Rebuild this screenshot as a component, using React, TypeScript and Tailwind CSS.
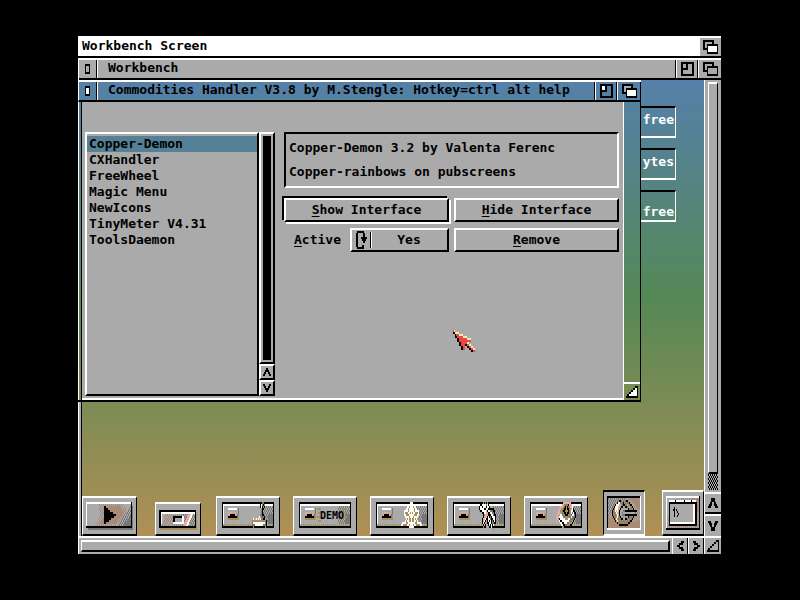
import React from "react";

const COLORS: Record<string, string> = {
  K: "#000000",
  W: "#ffffff",
  g: "#aaaaaa",
  G: "#777777",
  Y: "#aa9055",
  P: "#f0a898",
  B: "#a88a78",
  R: "#ee4444",
  C: "#eeeebb",
};

const RAINBOW =
  "bg-[linear-gradient(to_bottom,#5580aa_0px,#558855_220px,#b09055_456px)]";

/* Draws rows of colour letters; every cell is cw x ch pixels, a dot is see-through. */
function Pixels({ rows, x = 0, y = 0, cw = 1, ch = 2 }: { rows: string[]; x?: number; y?: number; cw?: number; ch?: number }) {
  const out: React.ReactNode[] = [];
  rows.forEach((row, r) => {
    let i = 0;
    while (i < row.length) {
      let j = i + 1;
      while (j < row.length && row[j] === row[i]) j++;
      if (row[i] !== ".") {
        out.push(
          <rect key={`${r}-${i}`} x={x + i * cw} y={y + r * ch} width={(j - i) * cw} height={ch} fill={COLORS[row[i]]} />
        );
      }
      i = j;
    }
  });
  return <g shapeRendering="crispEdges">{out}</g>;
}

function Svg({ w, h, children }: { w: number; h: number; children: React.ReactNode }) {
  return (
    <svg width={w} height={h} viewBox={`0 0 ${w} ${h}`} shapeRendering="crispEdges" className="block shrink-0" aria-hidden="true">
      {children}
    </svg>
  );
}

function Patterns() {
  return (
    <svg width="0" height="0" className="absolute" aria-hidden="true">
      <defs>
        <pattern id="dither" width="2" height="4" patternUnits="userSpaceOnUse">
          <rect width="1" height="2" fill="#777777" />
          <rect x="1" y="2" width="1" height="2" fill="#777777" />
        </pattern>
        <pattern id="tan" width="2" height="4" patternUnits="userSpaceOnUse">
          <rect width="1" height="2" fill="#a88a78" />
          <rect x="1" y="2" width="1" height="2" fill="#a88a78" />
        </pattern>
        <pattern id="goldDots" width="2" height="2" patternUnits="userSpaceOnUse">
          <rect width="1" height="2" fill="#aa9055" />
        </pattern>
        <pattern id="hatch" width="2" height="4" patternUnits="userSpaceOnUse">
          <rect width="1" height="2" fill="#000000" />
          <rect x="1" y="2" width="1" height="2" fill="#000000" />
        </pattern>
      </defs>
    </svg>
  );
}

/* ---------- title bar gadgets ---------- */

function CloseGlyph({ active }: { active?: boolean }) {
  return (
    <Svg w={5} h={10}>
      <rect width="5" height="10" fill="#000" />
      <rect x="1" y="2" width="3" height="6" fill={active ? "#fff" : "#aaa"} />
    </Svg>
  );
}

function ZoomGlyph({ active }: { active?: boolean }) {
  return (
    <Svg w={13} h={14}>
      <path d="M0 0h13v14H0zM2 2v10h9V2z" fill="#000" fillRule="evenodd" />
      <rect x="2" y="2" width="5" height="6" fill="#000" />
      <rect x="2" y="2" width="3" height="4" fill={active ? "#fff" : "#aaa"} />
    </Svg>
  );
}

function DepthGlyph({ active }: { active?: boolean }) {
  return (
    <Svg w={15} h={14}>
      <rect width="11" height="10" fill="#000" />
      <rect x="2" y="2" width="7" height="6" fill="#aaa" />
      <rect x="4" y="4" width="11" height="10" fill="#000" />
      <rect x="5" y="6" width="9" height="6" fill={active ? "#fff" : "#aaa"} />
    </Svg>
  );
}

function SizeGlyph({ active }: { active?: boolean }) {
  const rows = [
    ".........KKK",
    ".......KKffK",
    ".....KKffffK",
    "...KKffffffK",
    ".KKffffffffK",
    "KKKKKKKKKKKK",
  ];
  return (
    <Svg w={12} h={12}>
      <Pixels rows={rows.map((r) => r.replace(/f/g, active ? "W" : "g"))} />
    </Svg>
  );
}

const UP = ["...KKKK...", "...KKKK...", "..KK..KK..", ".KKK..KKK.", "KKK....KKK"];
const UP_SMALL = ["...KK...", "..KKKK..", ".KK..KK.", "KK....KK"];
const LEFT = ["....KKK", "..KKKK.", "KKK....", "..KKKK.", "....KKK"];

function Arrow({ dir, small }: { dir: "up" | "down" | "left" | "right"; small?: boolean }) {
  const flip = (r: string) => r.split("").reverse().join("");
  if (dir === "up" || dir === "down") {
    const base = small ? UP_SMALL : UP;
    return (
      <Svg w={small ? 8 : 10} h={small ? 8 : 10}>
        <Pixels rows={dir === "up" ? base : [...base].reverse()} />
      </Svg>
    );
  }
  return (
    <Svg w={7} h={10}>
      <Pixels rows={dir === "left" ? LEFT : LEFT.map(flip)} />
    </Svg>
  );
}

/* ---------- desktop icons ---------- */

const STATUE = [
  "..........KGGK........",
  ".........KWYKY........",
  "........gKWKYKg.......",
  "..........YKK.........",
  "..........GK..........",
  ".........gGK..........",
  "........gGGKK.........",
  "........W.GGGK........",
  "..W.PW.WPWGGKK........",
  ".YYYYYYYYYYYYYYK......",
  ".GWWWWWWWWWWWWGK......",
  ".GGGWWWWWWWWGGGK......",
  "..YKKKKKKKKKKKY.......",
];

const CREST = [
  ".........WWW..........",
  "........WWWWW.........",
  "......WWYWWWYWW.......",
  ".....WWYWWWWWYWW......",
  "...WWWWYWWWWWYWWWW....",
  "...WYYYWWYWYWWYYYW....",
  "...WWYYYWWWWWYYYWW....",
  "....WWWWYWWWYWWWW.....",
  ".....WYWYYWYYWYW......",
  "....WYWWYYWYYWWYW.....",
  ".WWWWYYWWWWWWWYYWWWW..",
  "WWYYYYWWYWWWYWWYYYYWW.",
  "........WWWWW.........",
];

const JESTER = [
  "....YKGKY............",
  ".KKWWWWYWK...........",
  "KWWKWWWKWWK..........",
  "KWWWWKKWWKKKKKK......",
  "YKKWWWWPKWWGGGKK.....",
  "...KKWWPPKKWWGGK.....",
  "....KYPPPKKKWWGKK....",
  "....KPPPKWKGKWWWK....",
  "...KPPWKKWWGKKWWK....",
  "...KPWKgKWKWKGKWK....",
  "...KWKggKKWWKGGKK....",
  "....KPKggKWKWKWG.....",
  "....YKKgggKKWKK......",
  "..............Y......",
];

const WATCH = [
  ".......PPPPPPPP.......",
  "......PPYGGGKPPP......",
  "....PPPYGKYKGYPPW.....",
  "...PPYYGKKYKKGYPWK....",
  "..PPYYGKKYYYKGYWWKK...",
  ".PPP.YGYKKYKKGYWGWKK..",
  ".P..WWGYYKKKYGYGWWGK..",
  "PP.WWWWGGYYYGYGWGGGK..",
  "PP.KWWWWWYYYWWGGGGK...",
  "P..WKKWWWWWWWGGYYK....",
  "....WWKKWWWGGYYYK.....",
  ".....WWKKGGYYYKK......",
  "......YYKKKKKK........",
];

const MINI = [
  "gWWWWWWWWWgG",
  "gggggggggggG",
  "gPgPPgPgPggG",
  "ggPKKKKKPgGY",
  "gKKKKKKKKKGY",
  "gYYYYYYYYYYY",
];

function DrawerArt({ children }: { children: React.ReactNode }) {
  return (
    <Svg w={52} h={28}>
      <rect width="52" height="26" fill="#000" />
      <rect x="1" y="2" width="50" height="22" fill="#aaa" />
      <rect x="1" y="2" width="50" height="2" fill="#fff" />
      <rect x="1" y="2" width="1" height="20" fill="#fff" />
      <rect x="39" y="4" width="12" height="18" fill="url(#dither)" />
      <rect x="46" y="12" width="5" height="10" fill="#777" />
      <rect x="1" y="22" width="50" height="2" fill="url(#goldDots)" />
      <Pixels rows={MINI} x={5} y={6} />
      {children}
    </Svg>
  );
}

function RunArt() {
  return (
    <Svg w={47} h={28}>
      <rect x="2" y="4" width="45" height="24" fill="#777" />
      <rect width="46" height="26" fill="#000" />
      <rect width="45" height="24" fill="#fff" />
      <rect x="1" y="2" width="44" height="22" fill="#aaa" />
      <path d="M13 2h22l8 8-12 14H9l5-10z" fill="url(#tan)" />
      <path d="M22 4h12l4 6-8 12H14z" fill="#a88a78" />
      <path d="M45 4v20H32l4-8z" fill="url(#dither)" />
      <path d="M45 12v12h-8z" fill="#777" />
      <Pixels rows={["KK", "KKKK", "KKKKKK", "KKKKKKKKK", "KKKKKKKKKKKK", "KKKKKKKKKK", "KKKKKKK", "KKKKK", "KK"]} x={18} y={4} />
    </Svg>
  );
}

function DiskArt() {
  return (
    <Svg w={38} h={20}>
      <rect x="1" y="2" width="37" height="18" fill="#aa9055" />
      <rect width="37" height="18" fill="#000" />
      <rect x="2" y="2" width="34" height="14" fill="#aaa" />
      <path d="M7 2h20v14H3z" fill="url(#tan)" />
      <rect x="22" y="2" width="14" height="14" fill="url(#dither)" />
      <rect x="2" y="2" width="34" height="2" fill="#fff" />
      <rect x="2" y="2" width="1" height="12" fill="#fff" />
      <rect x="14" y="6" width="11" height="8" fill="#fff" />
      <rect x="14" y="6" width="9" height="6" fill="#000" />
      <rect x="16" y="8" width="7" height="4" fill="#aaa" />
      <path d="M29 4h3l-5 12h-3z" fill="#f0a898" />
      <path d="M32 4h2l-5 12h-2z" fill="#fff" />
    </Svg>
  );
}

const RING = [
  ".......YKKGYGYGKKY.........",
  ".....YKWWGYGKYGYGGKY.......",
  "...YKWWWPgYGKKYGgYGKK......",
  "..YKWWWPPgKKggKKGYgYGK.....",
  ".YKYWWWPgK......gKGYGYKg...",
  ".KGYWPWPK..gGGKKKKKKKKKKKK.",
  ".KYGYWPgK..GggggggggggggG..",
  ".KGYGYWgK..GGGKKKKKKKKKKKK.",
  ".YKYGYWYGK......gKGYGYKg...",
  "..YKYWYGYGKKggKKGYGYGK.....",
  "...YKYWYGYGYGYGYGYGKK......",
  ".....YKGYGYGYGYGYKKY.......",
  ".......YKKKKKKKKKY.........",
];

function RingArt() {
  return (
    <Svg w={34} h={34}>
      <rect width="34" height="34" fill="#fff" />
      <rect width="33" height="32" fill="#000" />
      <rect x="1" y="2" width="32" height="30" fill="#aaa" />
      <path d="M1 32V20l12 8 20-4v8z" fill="#a88a78" />
      <path d="M1 14l8 10 24-18v18l-16 8H1z" fill="url(#tan)" />
      <path d="M1 2h20L1 20z" fill="url(#dither)" />
      <path d="M20 2h13v12z" fill="#a88a78" />
      <Pixels rows={RING} x={4} y={4} />
    </Svg>
  );
}

function ShellArt() {
  return (
    <Svg w={34} h={34}>
      <rect width="34" height="34" fill="#000" />
      <rect width="33" height="32" fill="#fff" />
      <rect x="1" y="2" width="32" height="30" fill="#aaa" />
      <path d="M12 2h21v30H1V22z" fill="url(#tan)" />
      <path d="M24 2h9v16z" fill="#a88a78" />
      <rect x="3" y="4" width="27" height="24" fill="#fff" />
      <path d="M9 4h1v2H9zM18 4h1v2h-1zM25 4h1v2h-1z" fill="#000" />
      <rect x="3" y="6" width="27" height="2" fill="#000" />
      <rect x="3" y="8" width="1" height="20" fill="#000" />
      <rect x="4" y="8" width="23" height="18" fill="#aaa" />
      <rect x="29" y="6" width="2" height="24" fill="#000" />
      <rect x="3" y="28" width="28" height="2" fill="#000" />
      <Pixels rows={["..K....", ".KK.K..", "..K..K.", "..K...K", "..K..K."]} x={6} y={11} />
    </Svg>
  );
}

function DesktopIcon({ label, size, selected, children }: { label: string; size: string; selected?: boolean; children: React.ReactNode }) {
  const edge = selected
    ? "border-t-black border-l-black border-r-white border-b-white"
    : "border-t-white border-l-white border-r-black border-b-black";
  return (
    <button aria-label={label} className={`flex shrink-0 justify-center border-x border-y-2 bg-[#aaaaaa] pt-1 ${edge} ${size}`}>
      {children}
    </button>
  );
}

/* ---------- small pieces ---------- */

const RAISED = "border-2 border-t-white border-l-white border-r-black border-b-black";

function Gadget({ label, className, children }: { label: string; className: string; children: React.ReactNode }) {
  return (
    <button aria-label={label} className={`flex shrink-0 items-center justify-center ${className}`}>
      {children}
    </button>
  );
}

function PushButton({ hotkey, rest, isDefault }: { hotkey: string; rest: string; isDefault?: boolean }) {
  return (
    <button
      className={`h-6 bg-[#aaaaaa] leading-5 ${RAISED} ${isDefault ? "shadow-[-2px_-2px_0_#000,2px_2px_0_#fff]" : ""}`}
    >
      <span className="underline underline-offset-2">{hotkey}</span>
      {rest}
    </button>
  );
}

function Meter({ text, size }: { text: string; size: string }) {
  return (
    <div className={`flex h-8 w-[60px] items-end justify-end border-y-2 border-r border-t-black border-r-white border-b-white pr-px leading-4 text-white ${size}`}>
      {text}
    </div>
  );
}

const COMMODITIES = ["Copper-Demon", "CXHandler", "FreeWheel", "Magic Menu", "NewIcons", "TinyMeter V4.31", "ToolsDaemon"];

function CommoditiesWindow() {
  return (
    <section
      aria-label="Commodities Handler"
      className={`absolute top-0 -left-px flex h-[322px] w-[563px] flex-col ${RAINBOW}`}
    >
      <header className="flex h-[22px] shrink-0 border-y-2 border-l border-t-white border-b-black border-l-white">
        <Gadget label="Close" className="w-[18px] border-r border-black"><CloseGlyph active /></Gadget>
        <h2 className="min-w-0 flex-1 overflow-hidden border-l border-white pl-[10px] leading-4 whitespace-pre">
          Commodities Handler V3.8 by M.Stengle: Hotkey=ctrl alt help
        </h2>
        <Gadget label="Zoom" className="w-[24px] border-x border-r-white border-l-black shadow-[inset_1px_0_0_#fff,inset_-1px_0_0_#000]"><ZoomGlyph active /></Gadget>
        <Gadget label="Depth" className="w-[23px] border-r border-black"><DepthGlyph active /></Gadget>
      </header>
      <div className="flex min-h-0 flex-1 border-l border-white">
        <div className="w-[3px] shrink-0 border-r border-black" />
        <div className="flex flex-1 gap-[9px] border-b-2 border-white bg-[#aaaaaa] pt-[30px] pr-1 pb-[2px] pl-[3px]">
          <div className="flex">
            <ul role="listbox" aria-label="Available commodities" className={`w-[174px] pt-[2px] leading-4 ${RAISED}`}>
              {COMMODITIES.map((name, i) => (
                <li key={name} role="option" aria-selected={i === 0} className={i === 0 ? "bg-[#558095] pl-[2px]" : "pl-[2px]"}>
                  {name}
                </li>
              ))}
            </ul>
            <div className="flex w-4 flex-col">
              <div className={`flex flex-1 px-[2px] py-[2px] ${RAISED}`}>
                <div className="flex-1 bg-black" />
              </div>
              <Gadget label="Scroll up" className={`h-4 ${RAISED}`}><Arrow dir="up" small /></Gadget>
              <Gadget label="Scroll down" className={`h-4 ${RAISED}`}><Arrow dir="down" small /></Gadget>
            </div>
          </div>
          <div className="flex min-w-0 flex-1 flex-col">
            <div className="h-14 border-2 border-t-black border-r-white border-b-white border-l-black pt-[2px] pl-[3px] leading-6 whitespace-pre">
              <p>Copper-Demon 3.2 by Valenta Ferenc</p>
              <p>Copper-rainbows on pubscreens</p>
            </div>
            <div className="mt-[10px] grid grid-cols-2 gap-x-[5px] gap-y-[6px]">
              <PushButton hotkey="S" rest="how Interface" isDefault />
              <PushButton hotkey="H" rest="ide Interface" />
              <div className="flex items-center justify-between pl-[10px]">
                <label htmlFor="active"><span className="underline underline-offset-2">A</span>ctive</label>
                <button id="active" className={`flex h-6 w-[99px] items-center leading-5 ${RAISED}`}>
                  <span className="flex h-4 w-[19px] items-center justify-center border-r border-black shadow-[1px_0_0_#fff]">
                    <Svg w={11} h={18}>
                      <Pixels
                        rows={[".KKKKKKK...", "KK.....KK..", "KK.....KK..", "KK...KKKKKK", "KK....KKKK.", "KK.....KK..", "KK.........", "KK....KK...", ".KKKKKKK..."]}
                      />
                    </Svg>
                  </span>
                  <span className="flex-1 text-center">Yes</span>
                </button>
              </div>
              <PushButton hotkey="R" rest="emove" />
            </div>
          </div>
        </div>
        <div className="flex w-[18px] shrink-0 flex-col justify-end border-x border-r-black border-l-white">
          <Gadget label="Resize" className="h-[18px] border-t-2 border-white"><SizeGlyph active /></Gadget>
        </div>
      </div>
      <div className="h-[2px] shrink-0 bg-black" />
    </section>
  );
}

const POINTER = [
  "RC....................",
  "KKCCCC................",
  "..KRRRCCCC............",
  "..KKRRRRRRCCCC........",
  "....KKRRRRRRRRCCCC....",
  "....KKRRRRRRRRRRRR....",
  "......KKRRRRRRCC......",
  "......KKRRRRKKRRCC....",
  "........KKRR..KKRRCC..",
  "........KKRR....KKRRCC",
  "..................KKRR",
];

export default function App() {
  return (
    <div className="flex min-h-screen bg-black pt-9 pr-[79px] pb-[46px] pl-[78px] font-['DejaVu_Sans_Mono',monospace] text-[13px] font-bold text-black">
      <Patterns />
      <main className="flex min-w-0 flex-1 flex-col bg-[#aaaaaa]">
        <header className="flex h-[22px] shrink-0 border-b-2 border-black bg-white">
          <h1 className="flex-1 pl-1 leading-5">Workbench Screen</h1>
          <Gadget label="Screen depth" className="mt-[2px] w-[21px] bg-[#aaaaaa]"><DepthGlyph active /></Gadget>
        </header>

        <section aria-label="Workbench" className="flex flex-1 flex-col border-l border-white">
          <header className="flex h-[22px] shrink-0 border-y-2 border-t-white border-b-black">
            <Gadget label="Close" className="w-[18px] border-r border-black"><CloseGlyph /></Gadget>
            <h2 className="flex-1 border-l border-white pl-[10px] leading-4">Workbench</h2>
            <Gadget label="Zoom" className="w-[24px] border-x border-r-white border-l-black shadow-[inset_1px_0_0_#fff,inset_-1px_0_0_#000]"><ZoomGlyph /></Gadget>
            <Gadget label="Depth" className="w-[22px]"><DepthGlyph /></Gadget>
          </header>

          <div className="relative -ml-px flex flex-1 border-l border-white">
            <div className="w-[3px] shrink-0 border-r border-black" />
            <div className={`flex min-w-0 flex-1 flex-col justify-between ${RAINBOW}`}>
              <div className="flex flex-col items-end gap-[10px] pt-[26px] pr-7">
                <Meter text="free" size="pb-2" />
                <Meter text="ytes" size="pb-2" />
                <Meter text="free" size="" />
              </div>
              <nav aria-label="Desktop icons" className="flex items-end gap-[13px] overflow-hidden">
                <DesktopIcon label="Run" size="h-10 w-[55px]"><RunArt /></DesktopIcon>
                <DesktopIcon label="Disk" size="ml-[5px] h-[34px] w-[46px] pt-[6px]"><DiskArt /></DesktopIcon>
                <DesktopIcon label="Art drawer" size="ml-[2px] h-10 w-16">
                  <DrawerArt><Pixels rows={STATUE} x={29} /></DrawerArt>
                </DesktopIcon>
                <DesktopIcon label="Demo drawer" size="h-10 w-16">
                  <DrawerArt>
                    <path d="M18 6h4v2h-4zM19 10h3v2h-3zM18 14h4v2h-4zM19 18h3v2h-3zM44 6h4v2h-4zM44 10h3v2h-3zM44 14h4v2h-4z" fill="#aa9055" />
                    <text x="21" y="17" fontSize="10" fill="#000">DEMO</text>
                  </DrawerArt>
                </DesktopIcon>
                <DesktopIcon label="Crest drawer" size="h-10 w-16">
                  <DrawerArt><Pixels rows={CREST} x={25} /></DrawerArt>
                </DesktopIcon>
                <DesktopIcon label="Games drawer" size="h-10 w-16">
                  <DrawerArt><Pixels rows={JESTER} x={26} /></DrawerArt>
                </DesktopIcon>
                <DesktopIcon label="Time drawer" size="h-10 w-16">
                  <DrawerArt><Pixels rows={WATCH} x={26} /></DrawerArt>
                </DesktopIcon>
                <DesktopIcon label="Tools" size="ml-[2px] h-[46px] w-[42px]" selected><RingArt /></DesktopIcon>
                <DesktopIcon label="Shell" size="ml-1 h-[46px] w-[42px]"><ShellArt /></DesktopIcon>
              </nav>
            </div>

            <div className="flex w-[17px] shrink-0 flex-col border-l border-white">
              <div className="flex flex-1 flex-col px-[3px] pt-[2px] pb-[2px]">
                <div className="flex-1 border-x border-y-2 border-t-white border-r-black border-b-black border-l-white" />
                <svg className="block h-4 w-full" aria-hidden="true">
                  <rect width="100%" height="100%" fill="url(#hatch)" />
                </svg>
              </div>
              <Gadget label="Scroll up" className="h-[22px] border-y-2 border-t-white border-b-black"><Arrow dir="up" /></Gadget>
              <Gadget label="Scroll down" className="h-[22px] border-t-2 border-white"><Arrow dir="down" /></Gadget>
            </div>

            <CommoditiesWindow />

            <div className="absolute top-[250px] left-[374px]">
              <Svg w={22} h={22}><Pixels rows={POINTER} /></Svg>
            </div>
          </div>

          <div className="flex h-[18px] shrink-0 border-t-2 border-white">
            <div className="flex flex-1 py-[2px] pr-[2px] pl-[2px]">
              <div className="flex-1 border-y-2 border-r-2 border-l border-t-white border-r-black border-b-black border-l-white" />
            </div>
            <Gadget label="Scroll left" className="w-4 border-x border-r-black border-l-white"><Arrow dir="left" /></Gadget>
            <Gadget label="Scroll right" className="w-4 border-x border-r-black border-l-white"><Arrow dir="right" /></Gadget>
            <Gadget label="Resize" className="w-[17px] border-l border-white"><SizeGlyph /></Gadget>
          </div>
        </section>
      </main>
    </div>
  );
}
